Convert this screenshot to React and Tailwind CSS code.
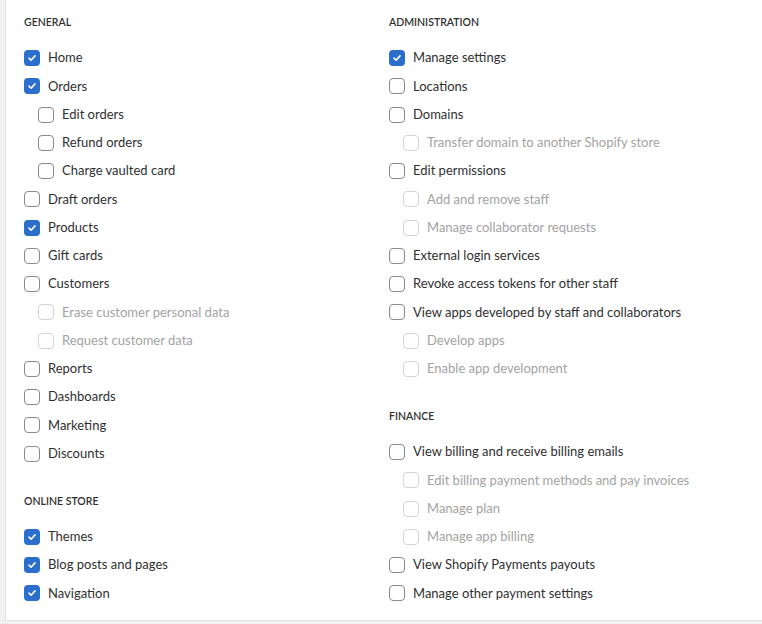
const GENERAL = [
  { label: 'Home', checked: true },
  { label: 'Orders', checked: true },
  { label: 'Edit orders', nested: true },
  { label: 'Refund orders', nested: true },
  { label: 'Charge vaulted card', nested: true },
  { label: 'Draft orders' },
  { label: 'Products', checked: true },
  { label: 'Gift cards' },
  { label: 'Customers' },
  { label: 'Erase customer personal data', nested: true, disabled: true },
  { label: 'Request customer data', nested: true, disabled: true },
  { label: 'Reports' },
  { label: 'Dashboards' },
  { label: 'Marketing' },
  { label: 'Discounts' },
];

const ONLINE_STORE = [
  { label: 'Themes', checked: true },
  { label: 'Blog posts and pages', checked: true },
  { label: 'Navigation', checked: true },
];

const ADMINISTRATION = [
  { label: 'Manage settings', checked: true },
  { label: 'Locations' },
  { label: 'Domains' },
  { label: 'Transfer domain to another Shopify store', nested: true, disabled: true },
  { label: 'Edit permissions' },
  { label: 'Add and remove staff', nested: true, disabled: true },
  { label: 'Manage collaborator requests', nested: true, disabled: true },
  { label: 'External login services' },
  { label: 'Revoke access tokens for other staff' },
  { label: 'View apps developed by staff and collaborators' },
  { label: 'Develop apps', nested: true, disabled: true },
  { label: 'Enable app development', nested: true, disabled: true },
];

const FINANCE = [
  { label: 'View billing and receive billing emails' },
  { label: 'Edit billing payment methods and pay invoices', nested: true, disabled: true },
  { label: 'Manage plan', nested: true, disabled: true },
  { label: 'Manage app billing', nested: true, disabled: true },
  { label: 'View Shopify Payments payouts' },
  { label: 'Manage other payment settings' },
];

function Checkbox({ checked, disabled }) {
  if (checked) {
    return (
      <span className="w-4 h-4 rounded-[4px] bg-[#2c6ecb] flex items-center justify-center shrink-0">
        <svg width="10" height="10" viewBox="0 0 10 10" fill="none">
          <path d="M2 5.2 4.1 7.2 8 2.9" stroke="white" strokeWidth="1.6" strokeLinecap="round" strokeLinejoin="round" />
        </svg>
      </span>
    );
  }
  return (
    <span
      className={
        disabled
          ? 'w-4 h-4 rounded-[4px] border border-[#d4d4d4] bg-white shrink-0'
          : 'w-4 h-4 rounded-[4px] border-[1.5px] border-[#8a8a8a] bg-white shrink-0'
      }
    />
  );
}

function PermissionRow({ label, checked, nested, disabled }) {
  return (
    <label className={`h-[28.25px] flex items-center gap-2 ${nested ? 'pl-[14px]' : ''}`}>
      <Checkbox checked={checked} disabled={disabled} />
      <span className={disabled ? 'text-[#a3a3a3]' : 'text-[#303030]'}>{label}</span>
    </label>
  );
}

function Section({ title, items }) {
  return (
    <section>
      <h3 className="text-[10.5px] font-semibold text-[#303030] uppercase leading-4 h-4 mb-[14px]">{title}</h3>
      <div className="flex flex-col">
        {items.map((item) => (
          <PermissionRow key={item.label} {...item} />
        ))}
      </div>
    </section>
  );
}

export default function App() {
  return (
    <div
      className="w-[762px] h-[624px] bg-[#f1f1f1] pl-[5px] pb-[2px] overflow-hidden"
      style={{ fontFamily: 'Lato, "Liberation Sans", sans-serif' }}
    >
      <div className="h-[621px] bg-white border-l border-b border-[#e3e3e3] pl-[18px] pt-[14px] grid grid-cols-[365px_1fr] text-[13px]">
        <div className="flex flex-col gap-[25px]">
          <Section title="General" items={GENERAL} />
          <Section title="Online store" items={ONLINE_STORE} />
        </div>
        <div className="flex flex-col gap-[25px]">
          <Section title="Administration" items={ADMINISTRATION} />
          <Section title="Finance" items={FINANCE} />
        </div>
      </div>
    </div>
  );
}
